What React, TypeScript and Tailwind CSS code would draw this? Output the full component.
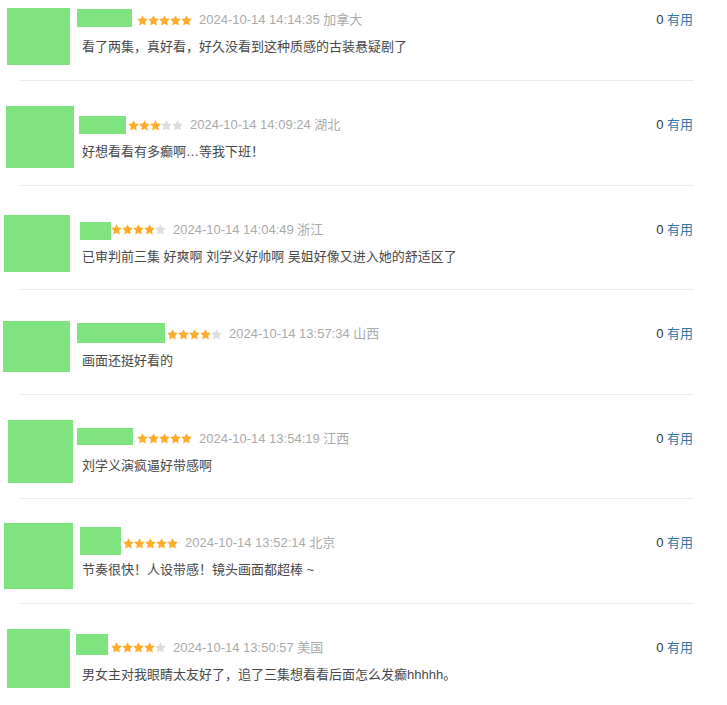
import React from "react";

type Review = {
  avatar: { x: number; y: number; w: number; h: number };
  name: { x: number; y: number; w: number; h: number };
  starsX: number;
  rating: number;
  time: string;
  place: string;
  text: string;
};

// positions are measured from the divider above each item
const reviews: Review[] = [
  {
    avatar: { x: 7, y: 32, w: 63, h: 57 },
    name: { x: 77, y: 33, w: 55, h: 18 },
    starsX: 137,
    rating: 5,
    time: "2024-10-14 14:14:35",
    place: "加拿大",
    text: "看了两集，真好看，好久没看到这种质感的古装悬疑剧了",
  },
  {
    avatar: { x: 6, y: 25, w: 68, h: 62 },
    name: { x: 79, y: 35, w: 47, h: 18 },
    starsX: 128,
    rating: 3,
    time: "2024-10-14 14:09:24",
    place: "湖北",
    text: "好想看看有多癫啊…等我下班！",
  },
  {
    avatar: { x: 4, y: 29, w: 66, h: 57 },
    name: { x: 80, y: 36, w: 31, h: 18 },
    starsX: 111,
    rating: 4,
    time: "2024-10-14 14:04:49",
    place: "浙江",
    text: "已审判前三集 好爽啊 刘学义好帅啊 吴姐好像又进入她的舒适区了",
  },
  {
    avatar: { x: 3, y: 31, w: 67, h: 51 },
    name: { x: 77, y: 33, w: 88, h: 20 },
    starsX: 167,
    rating: 4,
    time: "2024-10-14 13:57:34",
    place: "山西",
    text: "画面还挺好看的",
  },
  {
    avatar: { x: 8, y: 25, w: 65, h: 63 },
    name: { x: 77, y: 33, w: 56, h: 17 },
    starsX: 137,
    rating: 5,
    time: "2024-10-14 13:54:19",
    place: "江西",
    text: "刘学义演疯逼好带感啊",
  },
  {
    avatar: { x: 4, y: 24, w: 69, h: 66 },
    name: { x: 80, y: 28, w: 41, h: 28 },
    starsX: 123,
    rating: 5,
    time: "2024-10-14 13:52:14",
    place: "北京",
    text: "节奏很快！人设带感！镜头画面都超棒 ~",
  },
  {
    avatar: { x: 7, y: 25, w: 63, h: 59 },
    name: { x: 76, y: 30, w: 32, h: 21 },
    starsX: 111,
    rating: 4,
    time: "2024-10-14 13:50:57",
    place: "美国",
    text: "男女主对我眼睛太友好了，追了三集想看看后面怎么发癫hhhhh。",
  },
];

function Star({ on }: { on: boolean }) {
  return (
    <svg width="11" height="11" viewBox="0 0 24 24" className="shrink-0">
      <path
        d="M12 .4l3.6 7.4 8.1 1.1-5.9 5.7 1.4 8.1L12 18.9l-7.2 3.8 1.4-8.1L.3 8.9l8.1-1.1z"
        fill={on ? "#ffac2d" : "#dcdcdc"}
      />
    </svg>
  );
}

function ReviewItem({ r }: { r: Review }) {
  const nameGap = r.starsX - r.name.x - r.name.w;
  return (
    <div className="flex h-[103.6px] pr-[34px]">
      <div className="w-[82px] shrink-0">
        <div
          className="bg-[#7fe37f]"
          style={{ marginLeft: r.avatar.x, marginTop: r.avatar.y, width: r.avatar.w, height: r.avatar.h }}
        />
      </div>
      <div className="flex-1 pt-[34px]">
        <div className="flex h-5 items-start">
          <div
            className="shrink-0 bg-[#7fe37f]"
            style={{ marginLeft: r.name.x - 82, marginTop: r.name.y - 34, width: r.name.w, height: r.name.h }}
          />
          <div className="flex h-5 items-center" style={{ marginLeft: nameGap }}>
            {[0, 1, 2, 3, 4].map((i) => (
              <Star key={i} on={i < r.rating} />
            ))}
          </div>
          <span className="ml-[7px] text-[13px] leading-5 text-[#aaa]">
            {r.time} {r.place}
          </span>
          <span className="ml-auto text-[13px] leading-5 text-[#333]">
            0 <span className="text-[#37a]">有用</span>
          </span>
        </div>
        <p className="mt-[7px] text-[13px] leading-5 text-[#494949]">{r.text}</p>
      </div>
    </div>
  );
}

export default function App() {
  return (
    <div
      className="h-[705px] w-[727px] overflow-hidden bg-white"
      style={{ fontFamily: '"Liberation Sans", "Noto Sans CJK SC", sans-serif' }}
    >
      <div className="-mt-[23.6px]">
        {reviews.map((r, i) => (
          <div key={i}>
            <ReviewItem r={r} />
            <div className="ml-[19px] h-px w-[675px] bg-[#ebebeb]" />
          </div>
        ))}
      </div>
    </div>
  );
}
